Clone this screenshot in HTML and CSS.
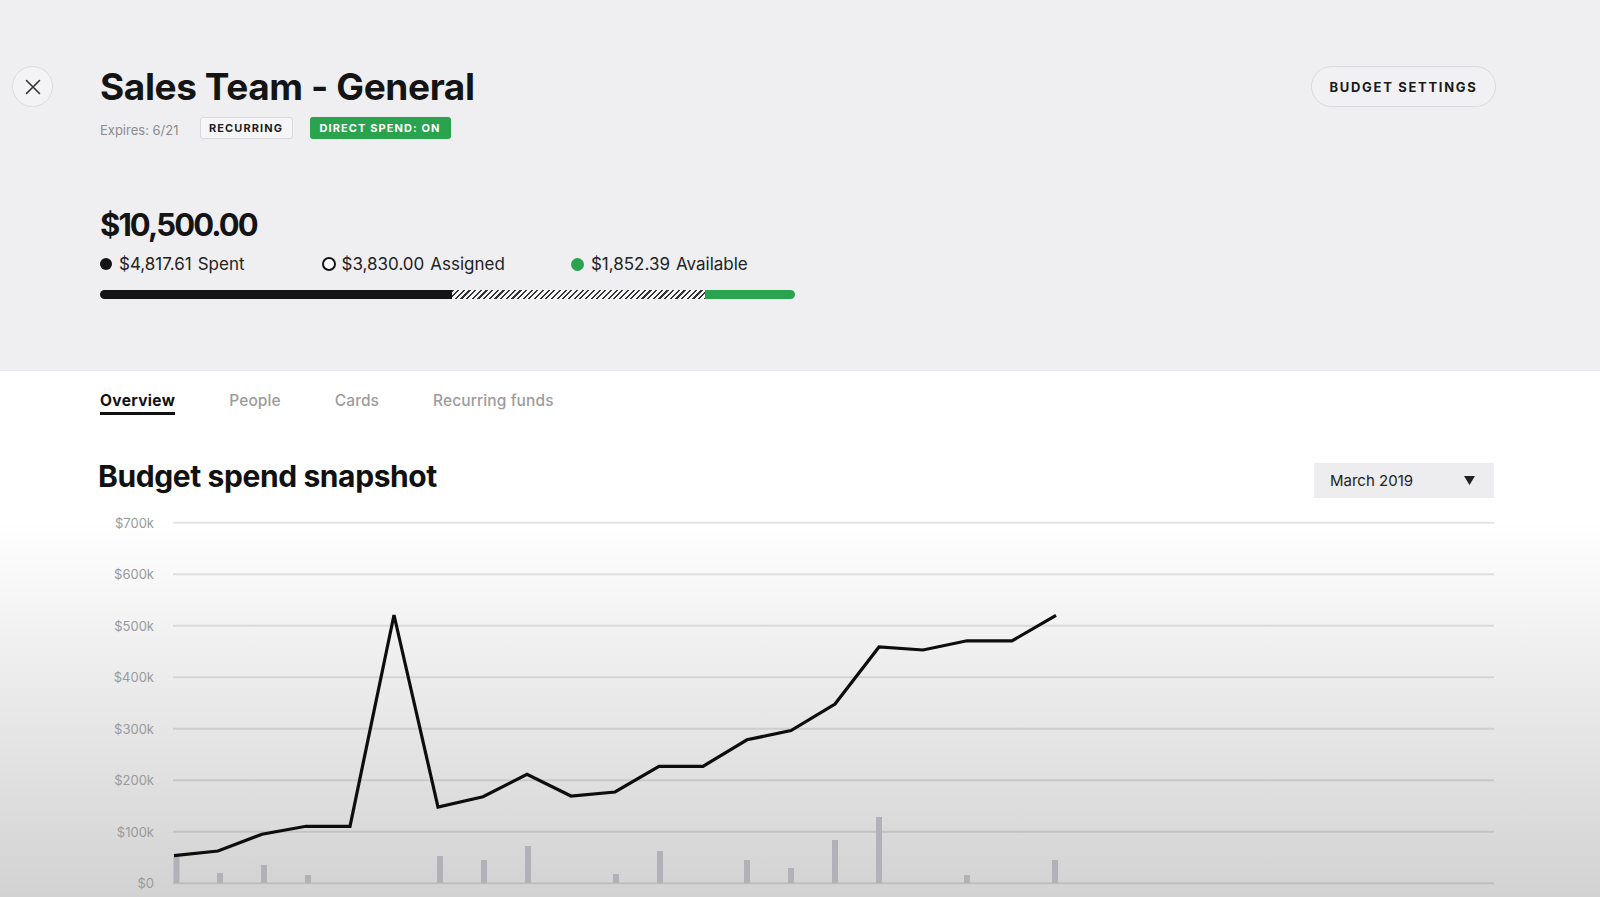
FILE: index.html
```html
<!DOCTYPE html>
<html lang="en">
<head>
<meta charset="utf-8">
<title>Sales Team - General</title>
<link rel="stylesheet" href="styles.css">
</head>
<body>
<div class="page">
  <header class="hero">
    <div class="top">
      <button class="close" aria-label="Close">
        <svg width="16" height="16" viewBox="0 0 16 16"><path d="M1.5 1.5 L14.5 14.5 M14.5 1.5 L1.5 14.5" stroke="#333" stroke-width="1.6" fill="none" stroke-linecap="round"/></svg>
      </button>
      <div class="title-block">
        <h1 class="title">Sales Team - General</h1>
        <div class="meta">
          <span class="expires">Expires: 6/21</span>
          <span class="badge badge-outline">RECURRING</span>
          <span class="badge badge-green">DIRECT SPEND: ON</span>
        </div>
      </div>
      <button class="settings">BUDGET SETTINGS</button>
    </div>
    <div class="budget">
      <div class="total">$10,500.00</div>
      <div class="legend">
        <div class="legend-item item-spent"><span class="dot dot-black"></span><span class="amt">$4,817.61</span><span class="lbl">Spent</span></div>
        <div class="legend-item item-assigned"><span class="dot dot-hollow"></span><span class="amt">$3,830.00</span><span class="lbl">Assigned</span></div>
        <div class="legend-item item-available"><span class="dot dot-green"></span><span class="amt">$1,852.39</span><span class="lbl">Available</span></div>
      </div>
      <div class="bar">
        <div class="seg seg-spent"></div>
        <div class="seg seg-assigned"></div>
        <div class="seg seg-available"></div>
      </div>
    </div>
  </header>
  <main class="content">
    <nav class="tabs">
      <a class="tab active">Overview</a>
      <a class="tab">People</a>
      <a class="tab">Cards</a>
      <a class="tab">Recurring funds</a>
    </nav>
    <div class="section-head">
      <h2 class="section-title">Budget spend snapshot</h2>
      <div class="dropdown">
        <span>March 2019</span>
        <svg width="11" height="9" viewBox="0 0 11 9"><path d="M0 0 H11 L5.5 9 Z" fill="#222"/></svg>
      </div>
    </div>
    <svg class="chart" width="1600" height="392" viewBox="0 505 1600 392">
      <g class="grid">
        <line x1="173" x2="1494" y1="522.8" y2="522.8"/>
        <line x1="173" x2="1494" y1="574.3" y2="574.3"/>
        <line x1="173" x2="1494" y1="625.8" y2="625.8"/>
        <line x1="173" x2="1494" y1="677.3" y2="677.3"/>
        <line x1="173" x2="1494" y1="728.8" y2="728.8"/>
        <line x1="173" x2="1494" y1="780.3" y2="780.3"/>
        <line x1="173" x2="1494" y1="831.8" y2="831.8"/>
        <line x1="173" x2="1494" y1="883.3" y2="883.3"/>
      </g>
      <g class="axis">
        <text x="154" y="527.5">$700k</text>
        <text x="154" y="579">$600k</text>
        <text x="154" y="630.5">$500k</text>
        <text x="154" y="682">$400k</text>
        <text x="154" y="733.5">$300k</text>
        <text x="154" y="785">$200k</text>
        <text x="154" y="836.5">$100k</text>
        <text x="154" y="888">$0</text>
      </g>
      <g class="bars">
        <rect x="173.5" y="856" width="6" height="27"/>
        <rect x="217" y="873" width="6" height="10"/>
        <rect x="261" y="865" width="6" height="18"/>
        <rect x="305" y="875" width="6" height="8"/>
        <rect x="437" y="856" width="6" height="27"/>
        <rect x="481" y="860" width="6" height="23"/>
        <rect x="525" y="846" width="6" height="37"/>
        <rect x="613" y="874" width="6" height="9"/>
        <rect x="657" y="851" width="6" height="32"/>
        <rect x="744" y="860" width="6" height="23"/>
        <rect x="788" y="868" width="6" height="15"/>
        <rect x="832" y="840" width="6" height="43"/>
        <rect x="876" y="817" width="6" height="66"/>
        <rect x="964" y="875" width="6" height="8"/>
        <rect x="1052" y="860" width="6" height="23"/>
      </g>
      <polyline class="line" points="174,855.7 218,851 262,834.3 306,826.3 350,826.3 394,615 438,807 483,796.7 527,774.3 571,796 615,792 659,766.3 703,766.3 747,739.8 791,730.6 835,704.1 879,646.9 923,650 967,640.8 1012,640.8 1056,615.3"/>
    </svg>
  </main>
</div>
</body>
</html>
```

FILE: styles.css
```css
* { box-sizing: border-box; }
html, body { margin: 0; padding: 0; }
body {
  font-family: Inter, "Liberation Sans", Arial, sans-serif;
  color: #111;
  background: #fff;
  width: 1600px;
  height: 897px;
  overflow: hidden;
}
.page { width: 1600px; height: 897px; display: flex; flex-direction: column; }

/* ---------- hero ---------- */
.hero {
  height: 371px;
  background: #efeff2;
  padding: 65px 104px 0 12px;
  border-bottom: 1px solid #e6e6ea;
  flex: none;
}
.top { display: flex; align-items: flex-start; }
.close {
  width: 41px; height: 41px;
  margin-top: 1px;
  margin-right: 47px;
  border-radius: 50%;
  border: 1px solid #dcdce0;
  background: #f3f3f5;
  display: flex; align-items: center; justify-content: center;
  padding: 0;
  flex: none;
}
.title-block { flex: 1; }
.title {
  margin: 0;
  font-size: 37px;
  line-height: 44px;
  font-weight: 700;
  letter-spacing: -0.4px;
  color: #141414;
}
.meta {
  margin-top: 8px;
  display: flex;
  align-items: center;
  height: 22px;
}
.expires { font-size: 13px; color: #8c8c8c; margin-right: 21px; margin-top: 3px; }
.badge {
  height: 22px;
  display: inline-flex; align-items: center; justify-content: center;
  font-size: 11px; font-weight: 700; letter-spacing: 1.1px;
  border-radius: 3px;
  padding: 0 8px;
}
.badge-outline { background: #f6f6f8; border: 1px solid #dadade; color: #1e1e1e; width: 93px; margin-right: 17px; }
.badge-green { background: #2aa34f; color: #fff; width: 141px; }
.settings {
  margin-top: 1px;
  height: 41px;
  width: 185px;
  border-radius: 21px;
  border: 1px solid #dadade;
  background: #f1f1f4;
  font-family: inherit;
  font-size: 13px; font-weight: 700; letter-spacing: 1.7px;
  color: #1a1a1a;
  padding: 0;
  flex: none;
}

.budget { margin-top: 67px; padding-left: 88px; }
.total {
  font-size: 31px; line-height: 38px; font-weight: 700;
  letter-spacing: -1.9px;
  color: #141414;
}
.legend { margin-top: 8px; display: flex; align-items: center; height: 24px; font-size: 17px; color: #222; }
.legend-item { display: flex; align-items: center; }
.item-assigned { margin-left: 77px; }
.item-available { margin-left: 66px; }
.dot { width: 12px; height: 12px; border-radius: 50%; margin-right: 7px; flex: none; }
.dot-black { background: #141414; }
.dot-hollow { width: 14px; height: 14px; background: #fff; border: 2px solid #141414; margin-right: 6px; }
.dot-green { width: 13px; height: 13px; background: #2aa34f; }
.lbl { margin-left: 6px; }

.bar { margin-top: 14px; display: flex; height: 9px; width: 695px; border-radius: 5px; overflow: hidden; }
.seg { height: 100%; }
.seg-spent { width: 352px; background: #141414; }
.seg-assigned {
  width: 253px;
  background: repeating-linear-gradient(135deg, #333 0 1.5px, #f8f8f8 1.5px 4px);
}
.seg-available { width: 90px; background: #2aa34f; }

/* ---------- content ---------- */
.content {
  flex: 1;
  background: linear-gradient(to bottom, #ffffff 0, #ffffff 150px, #e8e8e8 340px, #d2d2d2 100%);
}
.tabs { display: flex; padding: 20px 0 0 100px; gap: 54px; }
.tab {
  font-size: 15.5px; line-height: 20px; font-weight: 500;
  color: #9c9c9c;
  padding-bottom: 1px;
  border-bottom: 3px solid transparent;
  letter-spacing: 0.1px;
}
.tab.active { color: #111; font-weight: 700; border-bottom-color: #111; letter-spacing: 0.35px; }

.section-head {
  display: flex; align-items: flex-start; justify-content: space-between;
  margin-top: 43px;
  padding: 0 106px 0 98px;
}
.section-title { margin: 0; font-size: 30px; line-height: 36px; font-weight: 700; letter-spacing: -0.4px; color: #111; }
.dropdown {
  margin-top: 5px;
  width: 180px; height: 35px;
  background: #ededf0;
  display: flex; align-items: center; justify-content: space-between;
  padding: 0 19px 0 16px;
  font-size: 15px; color: #222;
}
.chart { display: block; margin-top: 7px; }
.grid line { stroke: rgba(0, 0, 0, 0.1); stroke-width: 2; }
.axis text { font-family: Inter, "Liberation Sans", sans-serif; font-size: 13px; fill: #9a9a9a; text-anchor: end; }
.bars rect { fill: #b1b1b7; }
.line { fill: none; stroke: #0d0d0d; stroke-width: 3.2; stroke-linejoin: miter; stroke-linecap: butt; }
```
